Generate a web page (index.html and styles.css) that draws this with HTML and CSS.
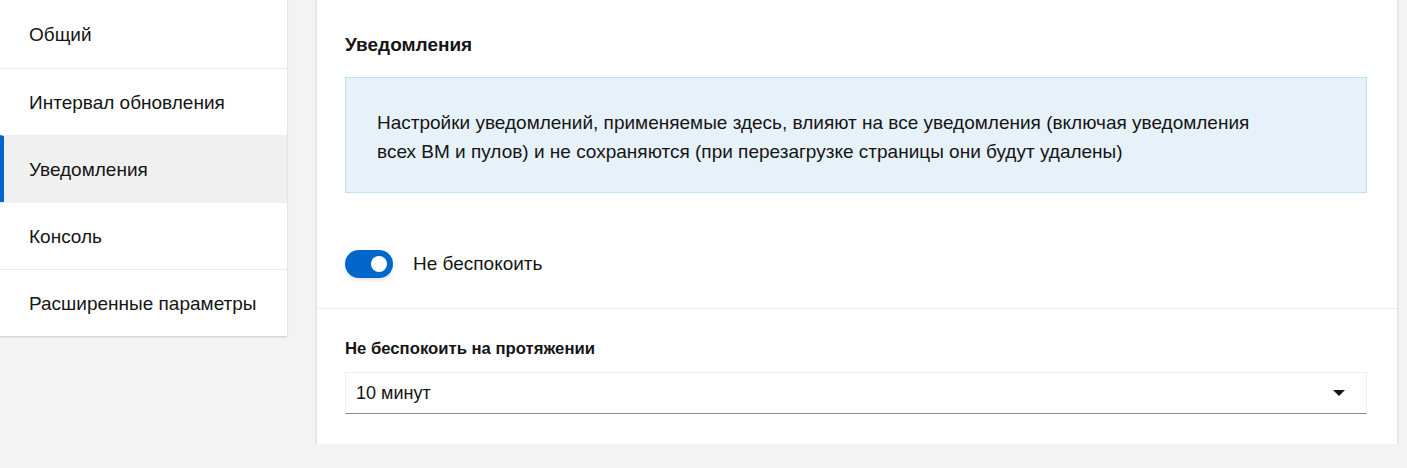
FILE: index.html
```html
<!DOCTYPE html>
<html lang="ru">
<head>
    <meta charset="UTF-8">
    <meta name="viewport" content="width=device-width, initial-scale=1.0">
    <title>Настройки</title>
    <link rel="stylesheet" href="styles.css">
</head>
<body>
    <div class="layout">
        <nav class="side-nav">
            <a class="nav-item" href="#">Общий</a>
            <a class="nav-item" href="#">Интервал обновления</a>
            <a class="nav-item active" href="#">Уведомления</a>
            <a class="nav-item" href="#">Консоль</a>
            <a class="nav-item" href="#">Расширенные параметры</a>
        </nav>

        <section class="panel">
            <div class="panel-body">
                <h2 class="panel-title">Уведомления</h2>

                <div class="info-box">
                    <p class="info-text">Настройки уведомлений, применяемые здесь, влияют на все уведомления (включая уведомления всех ВМ и пулов) и не сохраняются (при перезагрузке страницы они будут удалены)</p>
                </div>

                <label class="switch">
                    <input type="checkbox" class="switch-input" checked>
                    <span class="switch-track"><span class="switch-knob"></span></span>
                    <span class="switch-label">Не беспокоить</span>
                </label>
            </div>

            <div class="panel-body panel-footer">
                <div class="field-label">Не беспокоить на протяжении</div>
                <div class="select">
                    <span class="select-value">10 минут</span>
                    <span class="select-caret"></span>
                </div>
            </div>
        </section>
    </div>
</body>
</html>
```

FILE: styles.css
```css
* {
    margin: 0;
    padding: 0;
    box-sizing: border-box;
}

body {
    background-color: #f3f3f3;
    color: #151515;
    font-family: 'Liberation Sans', Arial, sans-serif;
    font-size: 19px;
    overflow: hidden;
}

.layout {
    display: flex;
    align-items: flex-start;
    gap: 30px;
    padding-right: 10px;
    margin-top: -2px;
}

/* left menu */
.side-nav {
    width: 287px;
    flex-shrink: 0;
    background-color: #fff;
    box-shadow: 0 1px 2px rgba(0, 0, 0, 0.18);
    display: flex;
    flex-direction: column;
}

.nav-item {
    display: block;
    height: 67px;
    line-height: 67px;
    padding-left: 29px;
    color: #151515;
    text-decoration: none;
    border-top: 1px solid #ececec;
}

.nav-item:first-child {
    border-top: none;
    height: 70px;
    line-height: 74px;
}

.nav-item.active {
    background-color: #f0f0f0;
    border-left: 4px solid #0066cc;
    padding-left: 25px;
    border-top-color: #f0f0f0;
}

.nav-item.active + .nav-item {
    border-top-color: #f0f0f0;
}

/* settings panel */
.panel {
    flex: 1;
    background-color: #fff;
    box-shadow: 0 1px 3px rgba(0, 0, 0, 0.18);
}

.panel-body {
    padding: 0 30px 0 28px;
}

.panel-title {
    font-size: 19px;
    font-weight: bold;
    padding-top: 35px;
    line-height: 24px;
    margin-bottom: 20px;
}

.info-box {
    background-color: #e7f1fa;
    border: 1px solid #bee1f4;
    padding: 30px 31px 26px;
}

.info-text {
    max-width: 900px;
    line-height: 29px;
}

.switch {
    display: flex;
    align-items: center;
    gap: 20px;
    padding: 57px 0 30px;
    cursor: pointer;
}

.switch-input {
    display: none;
}

.switch-track {
    position: relative;
    width: 48px;
    height: 28px;
    border-radius: 14px;
    background-color: #0066cc;
    box-shadow: 0 2px 4px rgba(0, 0, 0, 0.12);
}

.switch-knob {
    position: absolute;
    top: 6px;
    right: 6px;
    width: 16px;
    height: 16px;
    border-radius: 50%;
    background-color: #fff;
}

.switch-label {
    line-height: 28px;
}

.panel-footer {
    border-top: 1px solid #ececec;
    padding-top: 30px;
    padding-bottom: 30px;
}

.field-label {
    font-size: 16.7px;
    font-weight: bold;
    line-height: 20px;
    margin-bottom: 13px;
}

.select {
    display: flex;
    align-items: center;
    justify-content: space-between;
    height: 42px;
    padding: 0 21px 0 10px;
    font-size: 18px;
    border: 1px solid #f0f0f0;
    border-bottom-color: #8a8d90;
}

.select-caret {
    width: 0;
    height: 0;
    border-left: 6px solid transparent;
    border-right: 6px solid transparent;
    border-top: 6px solid #151515;
}
```
